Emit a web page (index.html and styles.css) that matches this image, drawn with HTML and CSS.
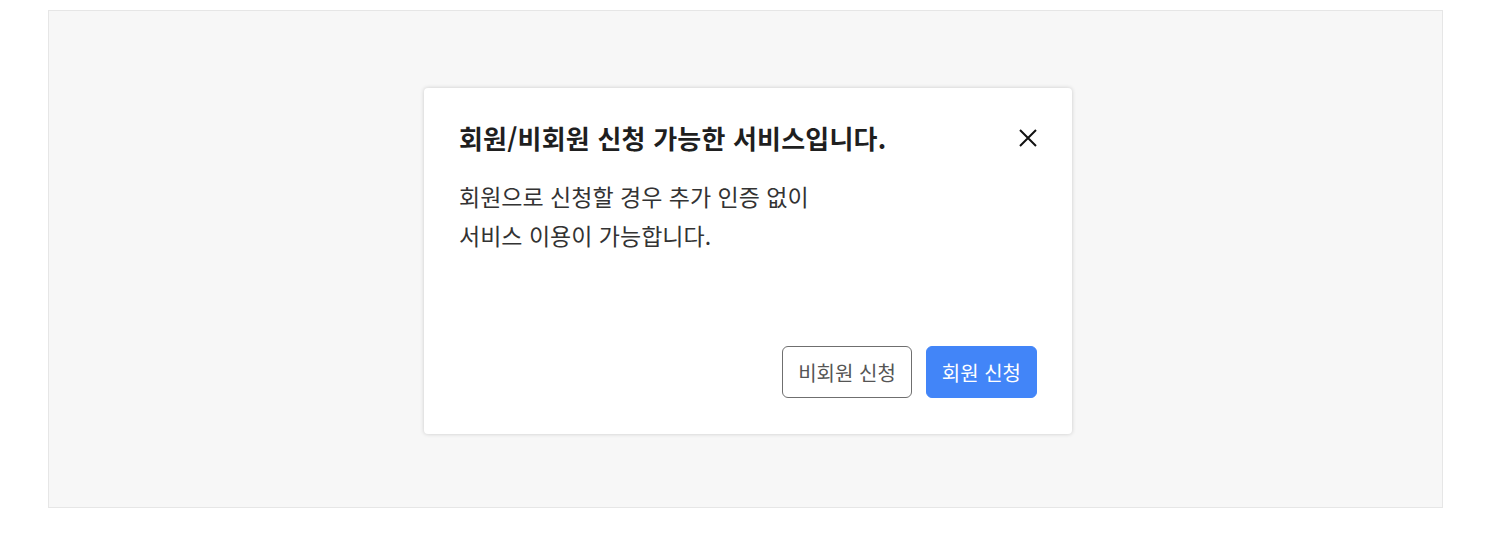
FILE: index.html
```html
<!DOCTYPE html>
<html lang="ko">
<head>
<meta charset="utf-8">
<link rel="stylesheet" href="styles.css">
</head>
<body>
<div class="stage">
  <div class="modal" role="dialog">
    <div class="modal-head">
      <h2 class="modal-title">회원/비회원 신청 가능한 서비스입니다.</h2>
      <button class="close" aria-label="닫기">
        <svg width="18" height="18" viewBox="0 0 18 18"><path d="M1 1L17 17M17 1L1 17" stroke="#111" stroke-width="2" fill="none"/></svg>
      </button>
    </div>
    <p class="modal-body">회원으로 신청할 경우 추가 인증 없이<br>서비스 이용이 가능합니다.</p>
    <div class="modal-foot">
      <button class="btn btn-outline">비회원 신청</button>
      <button class="btn btn-primary">회원 신청</button>
    </div>
  </div>
</div>
</body>
</html>
```

FILE: styles.css
```css
* { box-sizing: border-box; }
html, body { margin: 0; padding: 0; background: #fff; }
body {
  font-family: "Noto Sans CJK KR", "Noto Sans", sans-serif;
  color: #222;
}
.stage {
  margin: 10px 0 0 48px;
  width: 1395px;
  height: 498px;
  background: #f7f7f7;
  border: 1px solid #e6e6e6;
  display: flex;
  align-items: center;
  justify-content: center;
  padding: 4px 0 0 5px;
}
.modal {
  width: 648px;
  height: 346px;
  background: #fff;
  border-radius: 4px;
  box-shadow: 0 0 4px rgba(0,0,0,0.18);
  padding: 30px 35px 36px 35px;
  display: flex;
  flex-direction: column;
}
.modal-head {
  display: flex;
  align-items: center;
  justify-content: space-between;
}
.modal-title {
  margin: 0;
  font-size: 26px;
  font-weight: 700;
  line-height: 40px;
  letter-spacing: 0.2px;
  color: #1f1f1f;
}
.close {
  border: 0;
  background: none;
  padding: 0;
  width: 18px;
  height: 18px;
  display: flex;
  cursor: pointer;
}
.modal-body {
  margin: 19px 0 0;
  font-size: 23px;
  line-height: 39px;
  color: #333;
}
.modal-foot {
  margin-top: auto;
  display: flex;
  justify-content: flex-end;
  gap: 14px;
}
.btn {
  height: 52px;
  padding: 0 15px;
  font-family: inherit;
  font-size: 20px;
  border-radius: 6px;
  cursor: pointer;
}
.btn-outline {
  background: #fff;
  border: 1px solid #6f6f6f;
  color: #555;
}
.btn-primary {
  background: #4285f8;
  border: 1px solid #4285f8;
  color: #fff;
}
```
